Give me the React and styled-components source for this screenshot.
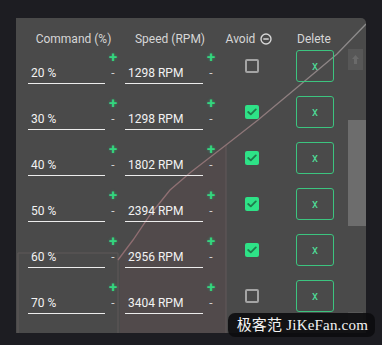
import styled, { createGlobalStyle } from 'styled-components';

const Global = createGlobalStyle`
body{
  margin:0;
  background:#1d1d22;
  font-family:Roboto, "Liberation Sans", sans-serif;
}
`
const Page = styled.div`
width:382px;
height:345px;
box-sizing:border-box;
padding:18px 16px 12px 16px;
position:relative;
overflow:hidden;
`
const Panel = styled.div`
position:relative;
width:350px;
height:315px;
background:#4a4a4a;
border-radius:0 5px 0 0;
display:flex;
flex-direction:column;
overflow:hidden;
`
const Chart = styled.svg`
position:absolute;
left:0;
top:0;
width:350px;
height:315px;
pointer-events:none;
`
const Cols = `
display:grid;
grid-template-columns:77px 20px 78px 16px 66px 62px;
padding-left:12px;
`
const Header = styled.div`
${Cols}
position:relative;
height:30px;
box-sizing:border-box;
padding-top:12px;
color:#d6d6d6;
font-size:12px;
line-height:16px;
`
const HeadCell = styled.div`
grid-column:span ${p => p.$span || 1};
display:flex;
align-items:center;
justify-content:center;
gap:5px;
margin-left:${p => p.$shift || 0}px;
`
const Body = styled.div`
position:relative;
flex:1;
display:flex;
min-height:0;
`
const List = styled.div`
flex:1;
overflow:hidden;
padding-top:2px;
`
const Row = styled.div`
${Cols}
height:46px;
`
const Field = styled.div`
align-self:start;
margin-top:15px;
height:19px;
box-sizing:border-box;
padding-left:3px;
border-bottom:1px solid #ececec;
color:#f2f2f2;
font-size:12px;
line-height:17px;
`
const Steps = styled.div`
display:flex;
flex-direction:column;
align-items:center;
padding-right:${p => p.$pad || 0}px;
`
const Plus = styled.span`
color:#33d67f;
font-size:15px;
font-weight:700;
line-height:14px;
height:14px;
text-shadow:0 0 3px rgba(40,200,120,0.45);
`
const Minus = styled.span`
margin-top:2px;
color:#d0d0d0;
font-size:12px;
line-height:14px;
`
const BoxCell = styled.div`
display:flex;
justify-content:center;
align-items:flex-start;
padding-top:9px;
`
const Check = styled.div`
width:14px;
height:14px;
box-sizing:border-box;
border-radius:2px;
border:${p => p.$on ? 'none' : '2px solid #a4a4a4'};
background:${p => p.$on ? '#2ee287' : 'transparent'};
display:flex;
align-items:center;
justify-content:center;
`
const DelCell = styled.div`
display:flex;
justify-content:center;
align-items:flex-start;
padding-right:2px;
`
const DelButton = styled.div`
width:38px;
height:32px;
box-sizing:border-box;
border:1.5px solid #3cc47f;
border-radius:3px;
display:flex;
align-items:center;
justify-content:center;
color:#4fe09c;
font-size:12px;
`
const Scroll = styled.div`
width:18px;
display:flex;
flex-direction:column;
padding-top:1px;
`
const Arrow = styled.div`
width:15px;
height:21px;
background:#575757;
display:flex;
align-items:center;
justify-content:center;
`
const Track = styled.div`
flex:1;
display:flex;
flex-direction:column;
padding:50px 0 0 0;
`
const Thumb = styled.div`
width:18px;
height:106px;
background:#6d6d6d;
`
const Mark = styled.div`
position:absolute;
right:7px;
bottom:8px;
background:rgba(12,12,14,0.9);
border-radius:7px;
padding:3px 7px 3px 9px;
color:#f4f4f4;
font-family:"Liberation Serif", "Noto Sans CJK SC", serif;
font-size:15px;
line-height:18px;
letter-spacing:0.2px;
`

const rows = [
  { cmd: 20, rpm: 1298, avoid: false },
  { cmd: 30, rpm: 1298, avoid: true },
  { cmd: 40, rpm: 1802, avoid: true },
  { cmd: 50, rpm: 2394, avoid: true },
  { cmd: 60, rpm: 2956, avoid: true },
  { cmd: 70, rpm: 3404, avoid: false },
]

const Stepper = ({ pad }) => (
  <Steps $pad={pad}>
    <Plus>+</Plus>
    <Minus>-</Minus>
  </Steps>
)

const App = () => {
  return <Page>
    <Global />
    <Panel>
      <Chart viewBox="0 0 350 315">
        <defs>
          <linearGradient id="curve" x1="104" y1="0" x2="350" y2="0" gradientUnits="userSpaceOnUse">
            <stop offset="0" stopColor="#8f6c70" />
            <stop offset="0.45" stopColor="#8e7476" />
            <stop offset="1" stopColor="#8c8c8c" />
          </linearGradient>
        </defs>
        <polygon points="104,240 117,222 134,197 154,172 175,154 210,127 210,315 104,315" fill="rgba(190,90,100,0.07)" />
        <polyline points="2,315 2,235 102,235 102,315" fill="none" stroke="#5f5858" strokeWidth="1" />
        <line x1="210" y1="127" x2="210" y2="315" stroke="#62585a" strokeWidth="1" />
        <polyline points="102,242 117,222 134,197 154,172 175,154 210,127 242,102 284,67 321,36 350,6" fill="none" stroke="url(#curve)" strokeWidth="1.3" />
      </Chart>
      <Header>
        <HeadCell $span={2} $shift={-6}>Command (%)</HeadCell>
        <HeadCell $span={2} $shift={-4}>Speed (RPM)</HeadCell>
        <HeadCell $shift={-6}>
          Avoid
          <svg width="12" height="12" viewBox="0 0 12 12">
            <circle cx="6" cy="6" r="5" fill="none" stroke="#d6d6d6" strokeWidth="1.4" />
            <line x1="3.3" y1="6" x2="8.7" y2="6" stroke="#d6d6d6" strokeWidth="1.4" />
          </svg>
        </HeadCell>
        <HeadCell $shift={-4}>Delete</HeadCell>
      </Header>
      <Body>
        <List>
          {rows.map(r => (
            <Row key={r.cmd}>
              <Field>{r.cmd} %</Field>
              <Stepper pad={4} />
              <Field>{r.rpm} RPM</Field>
              <Stepper />
              <BoxCell>
                <Check $on={r.avoid}>
                  {r.avoid && (
                    <svg width="10" height="8" viewBox="0 0 10 8">
                      <polyline points="1.2,4 3.8,6.4 8.8,1.4" fill="none" stroke="#1f7a4c" strokeWidth="1.8" strokeLinecap="round" strokeLinejoin="round" />
                    </svg>
                  )}
                </Check>
              </BoxCell>
              <DelCell>
                <DelButton>x</DelButton>
              </DelCell>
            </Row>
          ))}
        </List>
        <Scroll>
          <Arrow>
            <svg width="9" height="11" viewBox="0 0 9 11">
              <path d="M4.5 1 L8 5 H6 V10 H3 V5 H1 Z" fill="#6a6a6a" />
            </svg>
          </Arrow>
          <Track>
            <Thumb />
          </Track>
          <Arrow />
        </Scroll>
      </Body>
    </Panel>
    <Mark>极客范 JiKeFan.com</Mark>
  </Page>
}

export default App;
